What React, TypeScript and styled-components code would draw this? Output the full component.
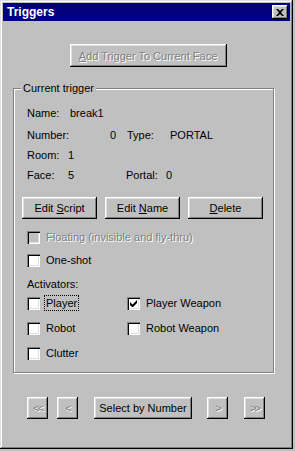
import React from 'react';
import styled, { createGlobalStyle, css } from 'styled-components';

const colors = {
  face: '#c0c0c0',
  light: '#dfdfdf',
  white: '#ffffff',
  shadow: '#808080',
  dark: '#000000',
  title: '#000080',
};

type checkProps = {
  label: React.ReactNode;
  checked?: boolean;
  disabled?: boolean;
  focused?: boolean;
};

const Check = ({ label, checked, disabled, focused }: checkProps) => (
  <CheckRow $disabled={disabled}>
    <CheckBox $disabled={disabled}>
      {checked && (
        <svg width='7' height='7' viewBox='0 0 7 7'>
          <path d='M0 2v3l2 2h1l4-4V0L2.5 4.5z' fill={colors.dark} />
        </svg>
      )}
    </CheckBox>
    <CheckLabel $focused={focused}>{label}</CheckLabel>
  </CheckRow>
);

export default function App() {
  return (
    <>
      <GlobalStyle />
      <Window>
        <TitleBar>
          <span>Triggers</span>
          <CloseButton>
            <svg width='8' height='7' viewBox='0 0 8 7'>
              <path d='M0 0h2l2 2 2-2h2L5 3.5 8 7H6L4 5 2 7H0l3-3.5z' fill={colors.dark} />
            </svg>
          </CloseButton>
        </TitleBar>

        <Body>
          <TopButtonRow>
            <Button $w={157} $h={23} disabled>
              <u>A</u>dd Trigger To Current Face
            </Button>
          </TopButtonRow>

          <GroupBox>
            <Legend>Current trigger</Legend>

            {/* Info about the selected trigger */}
            <Info>
              <InfoRow $mb={2}>
                <Cell $w={43}>Name:</Cell>
                <Cell>break1</Cell>
              </InfoRow>
              <InfoRow>
                <Cell $w={80}>Number:</Cell>
                <Cell $w={9} $right>0</Cell>
                <Cell $w={11} />
                <Cell $w={43}>Type:</Cell>
                <Cell>PORTAL</Cell>
              </InfoRow>
              <InfoRow>
                <Cell $w={41}>Room:</Cell>
                <Cell>1</Cell>
              </InfoRow>
              <InfoRow>
                <Cell $w={41}>Face:</Cell>
                <Cell $w={58}>5</Cell>
                <Cell $w={40}>Portal:</Cell>
                <Cell>0</Cell>
              </InfoRow>
            </Info>

            <EditRow>
              <Button $w={75} $h={22}>
                Edit <u>S</u>cript
              </Button>
              <Button $w={75} $h={22}>
                Edit <u>N</u>ame
              </Button>
              <Button $w={75} $h={22}>
                <u>D</u>elete
              </Button>
            </EditRow>

            <Options>
              <Check label='Floating (invisible and fly-thru)' disabled />
              <Check label='One-shot' />
            </Options>

            <ActivatorsTitle>Activators:</ActivatorsTitle>
            <Activators>
              <Check label='Player' focused />
              <Check label='Player Weapon' checked />
              <Check label='Robot' />
              <Check label='Robot Weapon' />
              <Check label='Clutter' />
            </Activators>
          </GroupBox>

          <NavRow>
            <Button $w={21} $h={22} $ml={14} disabled>
              <Arrow>&lt;&lt;</Arrow>
            </Button>
            <Button $w={21} $h={22} $ml={9} disabled>
              <Arrow>&lt;</Arrow>
            </Button>
            <Button $w={98} $h={22} $ml={16}>
              Select by Number
            </Button>
            <Button $w={21} $h={22} $ml={15} disabled>
              <Arrow>&gt;</Arrow>
            </Button>
            <Button $w={21} $h={22} $ml={16} disabled>
              <Arrow>&gt;&gt;</Arrow>
            </Button>
          </NavRow>
        </Body>
      </Window>
    </>
  );
}

const GlobalStyle = createGlobalStyle`
  html, body {
    margin: 0;
    padding: 0;
    background: ${colors.face};
  }

  body {
    font-family: "Liberation Sans", Arial, sans-serif;
    font-size: 11px;
    color: ${colors.dark};
  }
`;

const raised = css`
  box-shadow:
    inset -1px -1px ${colors.dark},
    inset 1px 1px ${colors.white},
    inset -2px -2px ${colors.shadow},
    inset 2px 2px ${colors.light};
`;

const embossed = css`
  color: ${colors.shadow};
  text-shadow: 1px 1px 0 ${colors.white};
`;

const Window = styled.div`
  box-sizing: border-box;
  width: 293px;
  height: 449px;
  padding: 3px;
  background: ${colors.face};
  box-shadow:
    inset -1px -1px ${colors.dark},
    inset 1px 1px ${colors.light},
    inset -2px -2px ${colors.shadow},
    inset 2px 2px ${colors.white};
  display: flex;
  flex-direction: column;
`;

const TitleBar = styled.div`
  height: 18px;
  background: ${colors.title};
  color: ${colors.white};
  font-weight: bold;
  font-size: 12px;
  display: flex;
  align-items: center;
  justify-content: space-between;
  padding: 0 2px 0 4px;
`;

const CloseButton = styled.div`
  box-sizing: border-box;
  width: 16px;
  height: 14px;
  background: ${colors.face};
  ${raised};
  display: flex;
  align-items: center;
  justify-content: center;
`;

const Body = styled.div`
  display: flex;
  flex-direction: column;
  padding: 0 0 0 10px;
`;

const TopButtonRow = styled.div`
  display: flex;
  justify-content: center;
  padding: 23px 7px 0 0;
  margin-bottom: 21px;
`;

const Button = styled.button<{ $w: number; $h: number; $ml?: number }>`
  box-sizing: border-box;
  flex: 0 0 auto;
  width: ${(p) => p.$w}px;
  height: ${(p) => p.$h}px;
  margin: 0 0 0 ${(p) => p.$ml ?? 0}px;
  padding: 0;
  border: none;
  background: ${colors.face};
  ${raised};
  font-family: inherit;
  font-size: 11px;
  color: ${colors.dark};
  text-align: center;
  white-space: nowrap;

  &:disabled {
    ${embossed};
  }

  u {
    text-decoration: underline;
  }
`;

const Arrow = styled.span`
  font-size: 11px;
  letter-spacing: -2px;
`;

const GroupBox = styled.div`
  position: relative;
  box-sizing: border-box;
  width: 261px;
  border: 1px solid ${colors.shadow};
  box-shadow: inset 1px 1px ${colors.white}, 1px 1px ${colors.white};
  padding: 14px 9px 9px 13px;
  display: flex;
  flex-direction: column;
`;

const Legend = styled.span`
  position: absolute;
  top: -7px;
  left: 7px;
  padding: 0 2px;
  background: ${colors.face};
  line-height: 13px;
`;

const Info = styled.div`
  display: flex;
  flex-direction: column;
`;

const InfoRow = styled.div<{ $mb?: number }>`
  display: flex;
  height: 20px;
  align-items: center;
  margin-bottom: ${(p) => p.$mb ?? 0}px;
`;

const Cell = styled.span<{ $w?: number; $right?: boolean }>`
  flex: 0 0 ${(p) => (p.$w ? `${p.$w}px` : 'auto')};
  text-align: ${(p) => (p.$right ? 'right' : 'left')};
  white-space: nowrap;
`;

const EditRow = styled.div`
  display: flex;
  gap: 8px;
  margin: 12px 0 0 -5px;
`;

const Options = styled.div`
  display: flex;
  flex-direction: column;
  gap: 3px;
  margin-top: 8px;
`;

const ActivatorsTitle = styled.div`
  height: 16px;
  line-height: 16px;
  margin-top: 6px;
`;

const Activators = styled.div`
  display: grid;
  grid-template-columns: 100px 1fr;
  row-gap: 5px;
  margin-top: 1px;
`;

const CheckRow = styled.div<{ $disabled?: boolean }>`
  display: flex;
  align-items: center;
  height: 20px;
  gap: 6px;
  ${(p) => p.$disabled && embossed};
`;

const CheckBox = styled.span<{ $disabled?: boolean }>`
  box-sizing: border-box;
  flex: 0 0 13px;
  height: 13px;
  background: ${(p) => (p.$disabled ? colors.face : colors.white)};
  box-shadow:
    inset 1px 1px ${colors.shadow},
    inset 2px 2px ${colors.dark},
    inset -1px -1px ${colors.white},
    inset -2px -2px ${colors.light};
  display: flex;
  align-items: center;
  justify-content: center;
`;

const CheckLabel = styled.span<{ $focused?: boolean }>`
  padding: 1px 1px;
  margin-left: -1px;
  outline: ${(p) => (p.$focused ? `1px dotted ${colors.dark}` : 'none')};
  white-space: nowrap;
`;

const NavRow = styled.div`
  display: flex;
  margin-top: 24px;
`;
